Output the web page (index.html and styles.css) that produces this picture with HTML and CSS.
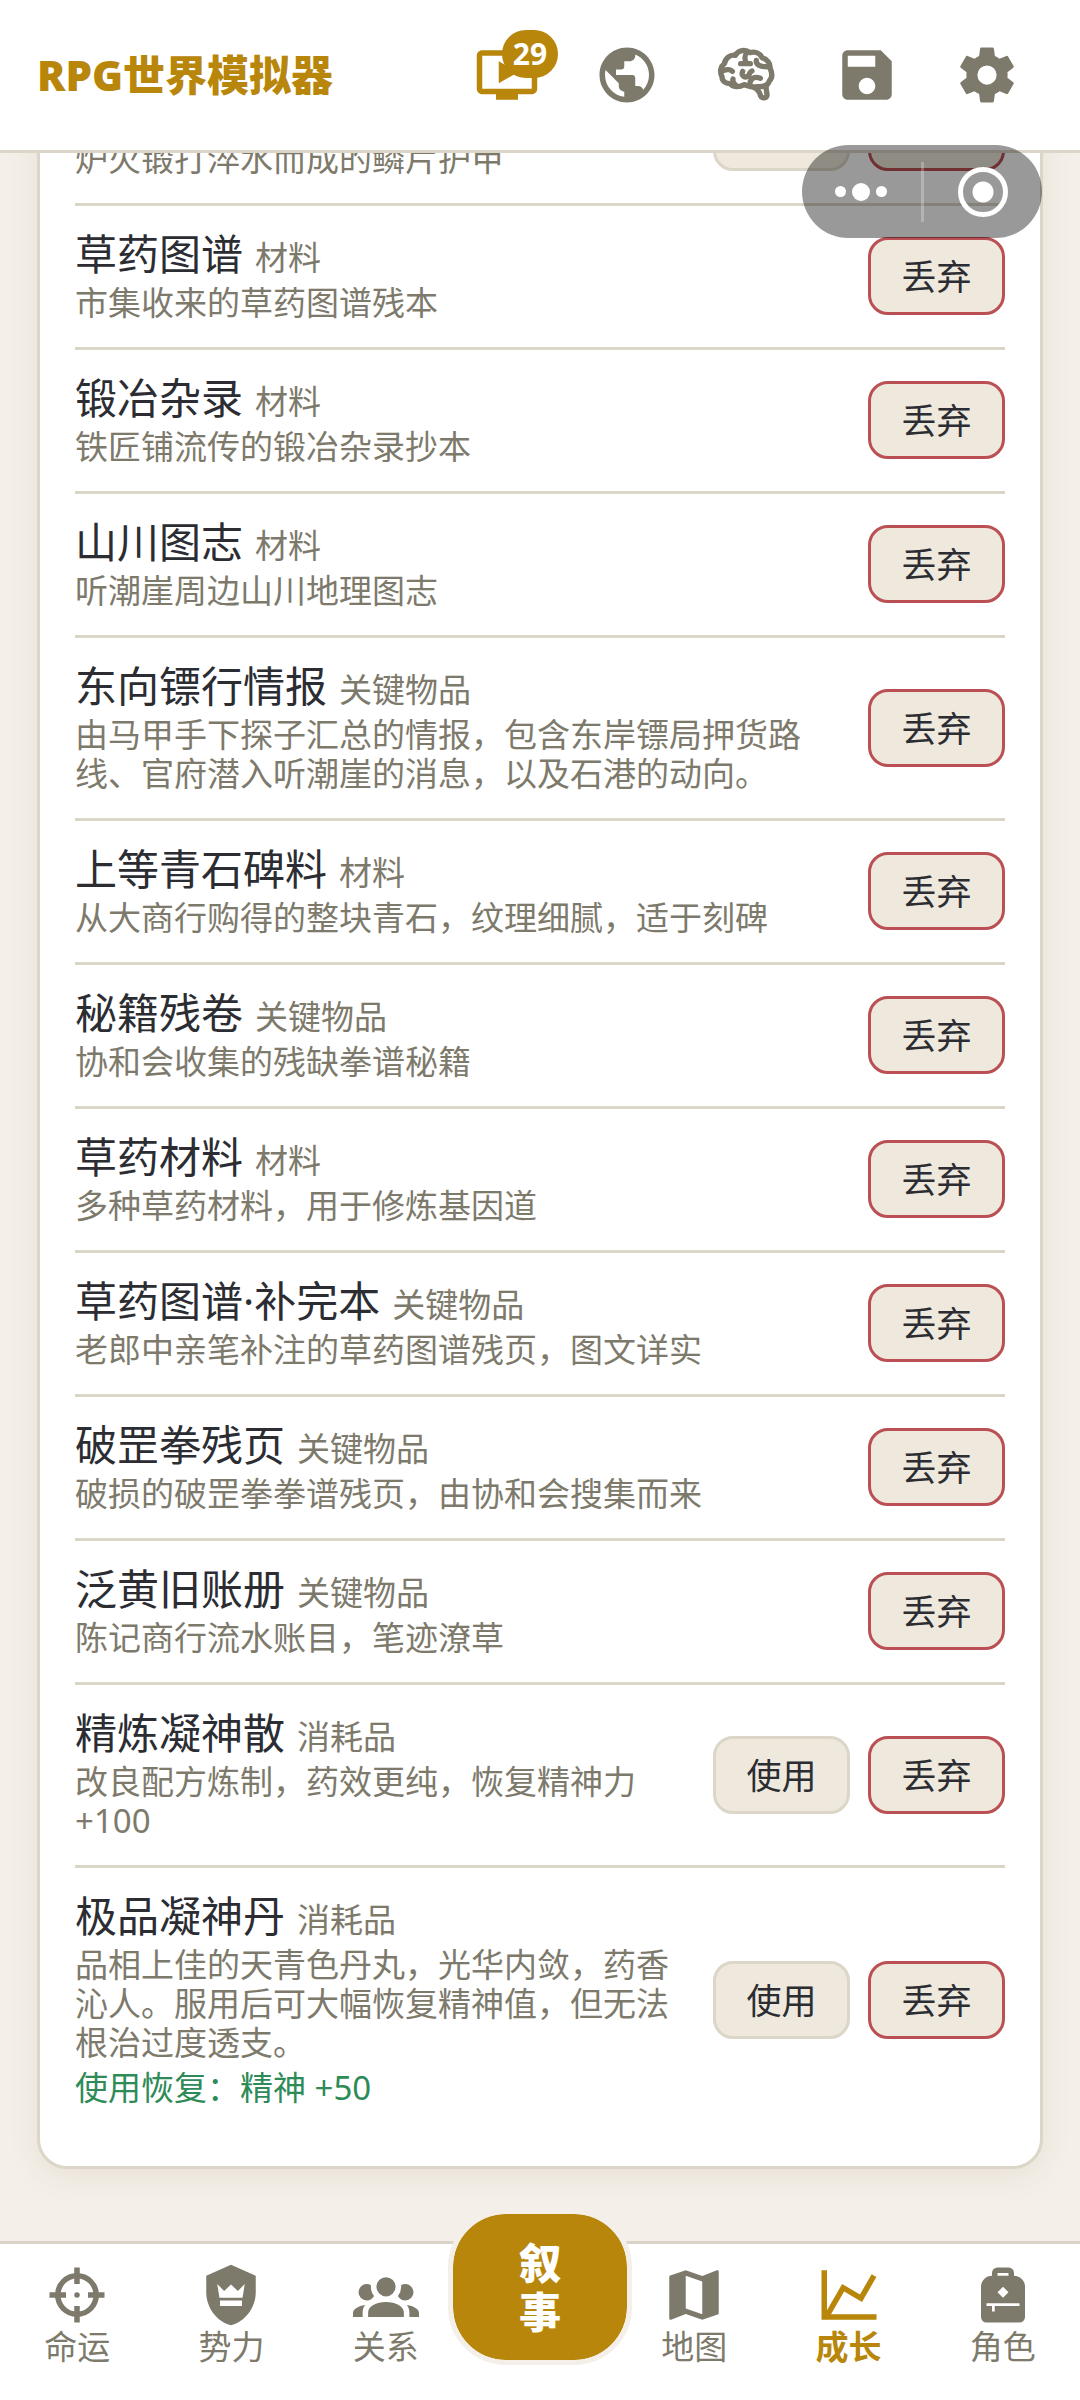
FILE: index.html
```html
<!DOCTYPE html>
<html lang="zh-CN">
<head>
    <meta charset="UTF-8">
    <meta name="viewport" content="width=device-width, initial-scale=1.0">
    <title>RPG世界模拟器</title>
    <link rel="stylesheet" href="styles.css">
</head>
<body>

    <header class="header">
        <h1 class="title">RPG世界模拟器</h1>
        <div class="header-tools">
            <button class="tool active" aria-label="视频">
                <svg class="icon" viewBox="0 0 24 24"><path d="M21 3H3c-1.11 0-2 .89-2 2v12c0 1.1.89 2 2 2h5v2h8v-2h5c1.1 0 1.99-.9 1.99-2L23 5c0-1.11-.9-2-2-2zm0 14H3V5h18v12zm-5-6l-7 4V7z"/></svg>
                <span class="badge">29</span>
            </button>
            <button class="tool" aria-label="世界">
                <svg class="icon" viewBox="0 0 24 24"><path d="M12 2C6.48 2 2 6.48 2 12s4.48 10 10 10 10-4.48 10-10S17.52 2 12 2zm-1 17.93c-3.95-.49-7-3.85-7-7.93 0-.62.08-1.21.21-1.79L9 15v1c0 1.1.9 2 2 2v1.93zm6.9-2.54c-.26-.81-1-1.39-1.9-1.39h-1v-3c0-.55-.45-1-1-1H8v-2h2c.55 0 1-.45 1-1V7h2c1.1 0 2-.9 2-2v-.41c2.93 1.19 5 4.06 5 7.41 0 2.08-.8 3.97-2.1 5.39z"/></svg>
            </button>
            <button class="tool" aria-label="记忆">
                <svg class="icon icon-line" viewBox="42 33 198 198">
                    <path d="M66 137C58 122 62 106 73 98C76 82 90 70 106 73C115 57 136 54 150 65C165 61 180 67 186 80C202 85 212 98 210 111C218 128 216 142 208 150C204 164 188 168 172 167C154 171 140 163 133 161C116 170 98 168 90 158C76 157 66 150 66 137Z"/>
                    <path d="M142 64C133 72 133 86 140 97M122 98H151M70 119C80 114 92 115 97 121M99 144C97 152 102 158 107 162M128 121C121 135 138 144 146 133C149 127 150 122 156 120M150 157C151 143 163 135 181 142M169 88C167 101 180 109 208 107"/>
                    <path d="M163 170C174 175 179 184 182 195C186 202 198 203 201 194C202 184 196 174 199 165"/>
                </svg>
            </button>
            <button class="tool" aria-label="保存">
                <svg class="icon" viewBox="0 0 24 24"><path d="M17 3H5c-1.11 0-2 .9-2 2v14c0 1.1.89 2 2 2h14c1.1 0 2-.9 2-2V7l-4-4zm-5 16c-1.66 0-3-1.34-3-3s1.34-3 3-3 3 1.34 3 3-1.34 3-3 3zm3-10H5V5h10v4z"/></svg>
            </button>
            <button class="tool" aria-label="设置">
                <svg class="icon" viewBox="0 0 24 24"><path d="M12 15.5A3.5 3.5 0 0 1 8.5 12 3.5 3.5 0 0 1 12 8.5a3.5 3.5 0 0 1 3.5 3.5 3.5 3.5 0 0 1-3.5 3.5m7.43-2.53c.04-.32.07-.64.07-.97s-.03-.66-.07-1l2.11-1.63c.19-.15.24-.42.12-.64l-2-3.46c-.12-.22-.39-.31-.61-.22l-2.49 1c-.52-.39-1.06-.73-1.69-.98l-.37-2.65A.506.506 0 0 0 14 2h-4c-.25 0-.46.18-.5.42l-.37 2.65c-.63.25-1.17.59-1.69.98l-2.49-1c-.22-.09-.49 0-.61.22l-2 3.46c-.13.22-.07.49.12.64L4.57 11c-.04.34-.07.67-.07 1s.03.65.07.97l-2.11 1.66c-.19.15-.25.42-.12.64l2 3.46c.12.22.39.3.61.22l2.49-1.01c.52.4 1.06.74 1.69.99l.37 2.65c.04.24.25.42.5.42h4c.25 0 .46-.18.5-.42l.37-2.65c.63-.26 1.17-.59 1.69-.99l2.49 1.01c.22.08.49 0 .61-.22l2-3.46c.12-.22.07-.49-.12-.64z"/></svg>
            </button>
        </div>
    </header>

    <main class="content">
        <ul class="card">
            <li class="item">
                <div class="info">
                    <div class="name"></div>
                    <p class="desc">炉火锻打淬水而成的鳞片护甲</p>
                </div>
                <button class="btn" aria-label="使用"></button>
                <button class="btn btn-drop" aria-label="丢弃"></button>
            </li>
            <li class="item">
                <div class="info">
                    <div class="name">草药图谱<span class="type">材料</span></div>
                    <p class="desc">市集收来的草药图谱残本</p>
                </div>
                <button class="btn btn-drop">丢弃</button>
            </li>
            <li class="item">
                <div class="info">
                    <div class="name">锻冶杂录<span class="type">材料</span></div>
                    <p class="desc">铁匠铺流传的锻冶杂录抄本</p>
                </div>
                <button class="btn btn-drop">丢弃</button>
            </li>
            <li class="item">
                <div class="info">
                    <div class="name">山川图志<span class="type">材料</span></div>
                    <p class="desc">听潮崖周边山川地理图志</p>
                </div>
                <button class="btn btn-drop">丢弃</button>
            </li>
            <li class="item">
                <div class="info">
                    <div class="name">东向镖行情报<span class="type">关键物品</span></div>
                    <p class="desc">由马甲手下探子汇总的情报，包含东岸镖局押货路线、官府潜入听潮崖的消息，以及石港的动向。</p>
                </div>
                <button class="btn btn-drop">丢弃</button>
            </li>
            <li class="item">
                <div class="info">
                    <div class="name">上等青石碑料<span class="type">材料</span></div>
                    <p class="desc">从大商行购得的整块青石，纹理细腻，适于刻碑</p>
                </div>
                <button class="btn btn-drop">丢弃</button>
            </li>
            <li class="item">
                <div class="info">
                    <div class="name">秘籍残卷<span class="type">关键物品</span></div>
                    <p class="desc">协和会收集的残缺拳谱秘籍</p>
                </div>
                <button class="btn btn-drop">丢弃</button>
            </li>
            <li class="item">
                <div class="info">
                    <div class="name">草药材料<span class="type">材料</span></div>
                    <p class="desc">多种草药材料，用于修炼基因道</p>
                </div>
                <button class="btn btn-drop">丢弃</button>
            </li>
            <li class="item">
                <div class="info">
                    <div class="name">草药图谱·补完本<span class="type">关键物品</span></div>
                    <p class="desc">老郎中亲笔补注的草药图谱残页，图文详实</p>
                </div>
                <button class="btn btn-drop">丢弃</button>
            </li>
            <li class="item">
                <div class="info">
                    <div class="name">破罡拳残页<span class="type">关键物品</span></div>
                    <p class="desc">破损的破罡拳拳谱残页，由协和会搜集而来</p>
                </div>
                <button class="btn btn-drop">丢弃</button>
            </li>
            <li class="item">
                <div class="info">
                    <div class="name">泛黄旧账册<span class="type">关键物品</span></div>
                    <p class="desc">陈记商行流水账目，笔迹潦草</p>
                </div>
                <button class="btn btn-drop">丢弃</button>
            </li>
            <li class="item">
                <div class="info">
                    <div class="name">精炼凝神散<span class="type">消耗品</span></div>
                    <p class="desc">改良配方炼制，药效更纯，恢复精神力+100</p>
                </div>
                <button class="btn">使用</button>
                <button class="btn btn-drop">丢弃</button>
            </li>
            <li class="item">
                <div class="info">
                    <div class="name">极品凝神丹<span class="type">消耗品</span></div>
                    <p class="desc">品相上佳的天青色丹丸，光华内敛，药香沁人。服用后可大幅恢复精神值，但无法根治过度透支。</p>
                    <p class="effect">使用恢复：精神 +50</p>
                </div>
                <button class="btn">使用</button>
                <button class="btn btn-drop">丢弃</button>
            </li>
        </ul>
    </main>

    <nav class="tabbar">
        <a class="tab" href="#fate">
            <svg class="icon" viewBox="0 0 24 24"><circle cx="12" cy="12" r="7" fill="none" stroke="currentColor" stroke-width="2"/><path d="M11 2h2v6h-2zM11 16h2v6h-2zM2 11h6v2H2zM16 11h6v2h-6z"/><circle cx="12" cy="12" r="1"/></svg>
            命运
        </a>
        <a class="tab" href="#force">
            <svg class="icon" viewBox="0 0 24 24"><path d="M12 1L3 5v6c0 5.55 3.84 10.74 9 12 5.16-1.26 9-6.45 9-12V5l-9-4m4 15H8v-2h8v2m.2-3H7.8L7 8l2.5 2.5L12 8.2l2.5 2.3L17 8z"/></svg>
            势力
        </a>
        <a class="tab" href="#relation">
            <svg class="icon" viewBox="0 0 24 24"><path d="M12 5.5A3.5 3.5 0 0 1 15.5 9a3.5 3.5 0 0 1-3.5 3.5A3.5 3.5 0 0 1 8.5 9 3.5 3.5 0 0 1 12 5.5M5 8c.56 0 1.08.15 1.53.42-.15 1.43.27 2.85 1.13 3.96C7.16 13.34 6.16 14 5 14a3 3 0 0 1-3-3 3 3 0 0 1 3-3m14 0a3 3 0 0 1 3 3 3 3 0 0 1-3 3c-1.16 0-2.16-.66-2.66-1.62a5.536 5.536 0 0 0 1.13-3.96c.45-.27.97-.42 1.53-.42M5.5 18.25c0-2.07 2.91-3.75 6.5-3.75s6.5 1.68 6.5 3.75V20h-13v-1.75M0 20v-1.5c0-1.39 1.89-2.56 4.45-2.9-.59.68-.95 1.62-.95 2.65V20H0m24 0h-3.5v-1.75c0-1.03-.36-1.97-.95-2.65 2.56.34 4.45 1.51 4.45 2.9V20Z"/></svg>
            关系
        </a>
        <div class="tab">
            <button class="story">叙<br>事</button>
        </div>
        <a class="tab" href="#map">
            <svg class="icon" viewBox="0 0 24 24"><path d="M15 19l-6-2.11V5l6 2.11M20.5 3h-.17L15 5.1 9 3 3.36 4.9c-.21.07-.36.25-.36.48V20.5A.5.5 0 0 0 3.5 21c.05 0 .11 0 .16-.03L9 18.9l6 2.1 5.64-1.9c.21-.1.36-.25.36-.48V3.5a.5.5 0 0 0-.5-.5z"/></svg>
            地图
        </a>
        <a class="tab active" href="#growth">
            <svg class="icon" viewBox="0 0 24 24"><path d="M16 11.78l4.24-7.33 1.73 1-5.23 9.05-6.51-3.75L5.46 19H22v2H2V3h2v14.54L9.5 8z"/></svg>
            成长
        </a>
        <a class="tab" href="#role">
            <svg class="icon" viewBox="0 0 24 24"><path fill-rule="evenodd" d="M10 2h4a2 2 0 0 1 2 2v1a4 4 0 0 1 4 4v11a2 2 0 0 1-2 2H6a2 2 0 0 1-2-2V9a4 4 0 0 1 4-4V4a2 2 0 0 1 2-2zM10 4v1h4V4zM12 9l-2 2 2 2 2-2zM6 15v1h2v2h1v-2h9v-1z"/></svg>
            角色
        </a>
    </nav>

    <!-- 小程序胶囊 -->
    <div class="capsule">
        <button class="capsule-btn" aria-label="更多">
            <span class="dot"></span>
            <span class="dot dot-big"></span>
            <span class="dot"></span>
        </button>
        <span class="capsule-line"></span>
        <button class="capsule-btn" aria-label="关闭">
            <span class="ring"></span>
        </button>
    </div>

</body>
</html>
```
FILE: styles.css
```css
* {
    margin: 0;
    padding: 0;
    box-sizing: border-box;
}

body {
    height: 100vh;
    display: flex;
    flex-direction: column;
    overflow: hidden;
    background-color: #f4efe8;
    color: #2b2d33;
    font-family: "Noto Sans", "Noto Sans CJK SC", sans-serif;
    font-size: 33px;
}

button {
    font-family: inherit;
    border: none;
    background: none;
    cursor: pointer;
}

.icon {
    width: 66px;
    height: 66px;
    fill: currentColor;
}

.icon-line {
    fill: none;
    stroke: currentColor;
    stroke-width: 16;
    stroke-linecap: round;
    stroke-linejoin: round;
}

/* 顶部栏 */
.header {
    display: flex;
    justify-content: space-between;
    align-items: center;
    height: 153px;
    padding: 0 37px;
    background-color: #fff;
    border-bottom: 3px solid #dcd6c8;
}

.title {
    font-size: 42px;
    font-weight: 900;
    line-height: 60px;
    color: #b8860b;
}

.header-tools {
    display: flex;
    gap: 8px;
}

.tool {
    position: relative;
    display: flex;
    justify-content: center;
    width: 112px;
    color: #7d7a6c;
}

.tool.active {
    color: #b8860b;
}

.badge {
    position: absolute;
    top: -12px;
    right: 5px;
    min-width: 56px;
    height: 48px;
    padding: 0 10px;
    border-radius: 24px;
    background-color: #b8860b;
    color: #fff;
    font-size: 30px;
    font-weight: bold;
    line-height: 48px;
}

/* 物品列表 */
.content {
    flex: 1;
    min-height: 0;
    display: flex;
    flex-direction: column-reverse;
    overflow-y: auto;
    scrollbar-width: none;
    padding: 37px 37px 72px;
}

.card {
    list-style: none;
    padding: 35px 35px 34px;
    background-color: #fff;
    border: 3px solid #dcd6c8;
    border-radius: 30px;
    box-shadow: 0 6px 32px rgba(90, 70, 30, 0.08);
}

.item {
    display: flex;
    align-items: center;
    gap: 18px;
    padding: 24px 0 25px;
    border-bottom: 3px solid #dbd7c8;
}

.item:last-child {
    border-bottom: none;
}

.info {
    flex: 1;
}

.name {
    min-height: 47px;
    margin-bottom: 6px;
    font-size: 42px;
    line-height: 47px;
}

.type {
    margin-left: 12px;
    font-size: 33px;
    line-height: 33px;
    color: #7d7a6c;
}

.desc {
    line-height: 39px;
    color: #7d7a6c;
}

.effect {
    margin-top: 6px;
    line-height: 39px;
    color: #2e8b57;
}

.btn {
    width: 137px;
    height: 78px;
    padding-bottom: 3px;
    border: 3px solid #dcd6c8;
    border-radius: 20px;
    background-color: #efe9dd;
    color: #2b2d33;
    font-size: 35px;
}

.btn-drop {
    border-color: #bb5054;
}

/* 底部导航 */
.tabbar {
    display: flex;
    height: 159px;
    background-color: #fff;
    border-top: 3px solid #dcd3c8;
}

.tab {
    flex: 1;
    min-width: 0;
    display: flex;
    flex-direction: column;
    align-items: center;
    padding-top: 18px;
    line-height: 38px;
    color: #7d7a6c;
    text-decoration: none;
}

.tab.active {
    color: #b8860b;
    font-weight: bold;
}

.story {
    position: relative;
    top: -53px;
    width: 184px;
    padding: 24px 0;
    border: 5px solid #f4efe8;
    border-radius: 58px;
    background-color: #b8860b;
    background-clip: padding-box;
    color: #fff;
    font-size: 42px;
    font-weight: 900;
    line-height: 49px;
}

/* 悬浮胶囊 */
.capsule {
    position: fixed;
    top: 145px;
    right: 38px;
    display: flex;
    align-items: center;
    width: 240px;
    height: 93px;
    border-radius: 47px;
    background-color: rgba(0, 0, 0, 0.4);
}

.capsule-btn {
    flex: 1;
    display: flex;
    justify-content: center;
    align-items: center;
    gap: 6px;
}

.capsule-line {
    width: 3px;
    height: 60px;
    background-color: rgba(255, 255, 255, 0.25);
}

.dot {
    width: 11px;
    height: 11px;
    border-radius: 50%;
    background-color: #fff;
}

.dot-big {
    width: 18px;
    height: 18px;
}

.ring {
    width: 50px;
    height: 50px;
    border: 5px solid #fff;
    border-radius: 50%;
    background: radial-gradient(circle, #fff 10px, transparent 11px);
}
```
